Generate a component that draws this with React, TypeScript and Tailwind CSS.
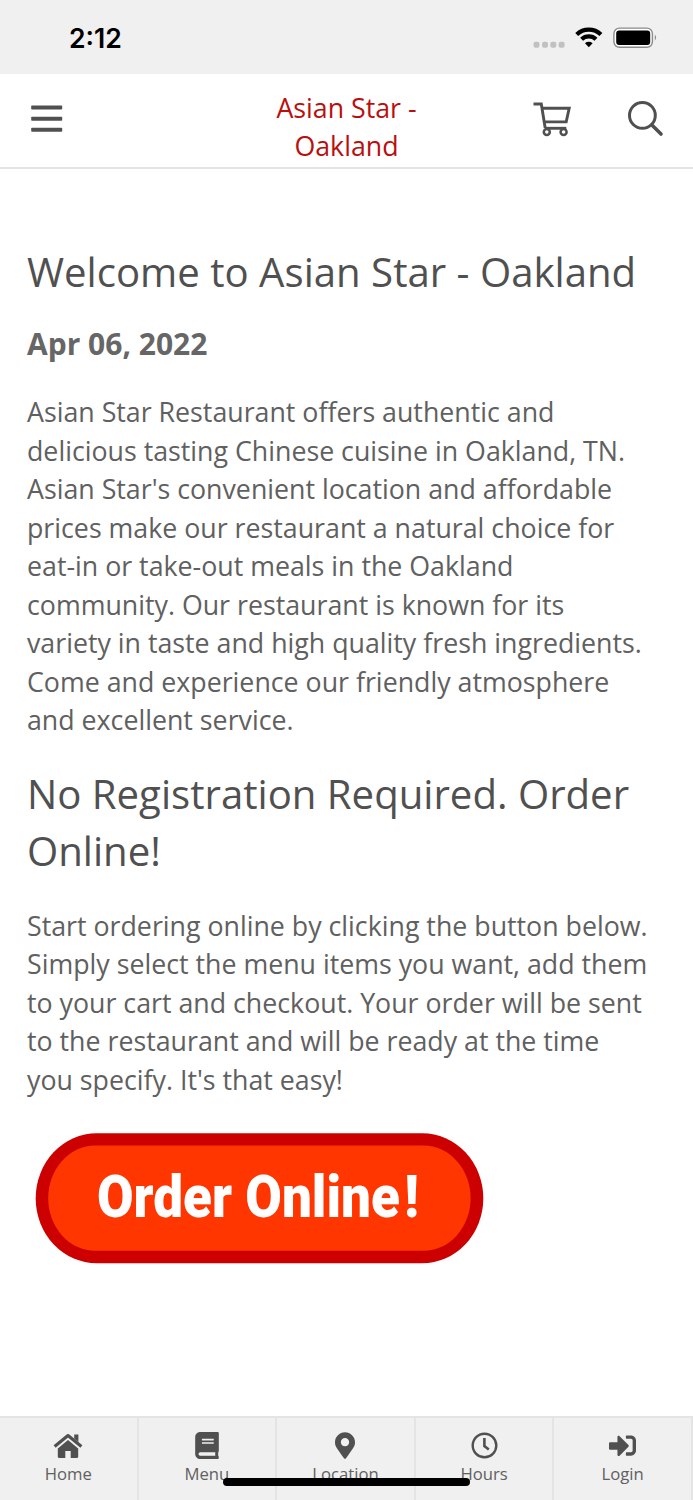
import { FaBook, FaMapMarkerAlt, FaSignInAlt } from "react-icons/fa";

const about = [
  { text: "Asian Star Restaurant offers authentic and" },
  { text: "delicious tasting Chinese cuisine in Oakland, TN." },
  { text: "Asian Star's convenient location and affordable" },
  { text: "prices make our restaurant a natural choice for" },
  { text: "eat-in or take-out meals in the Oakland" },
  { text: "community. Our restaurant is known for its" },
  { text: "variety in taste and high quality fresh ingredients." },
  { text: "Come and experience our friendly atmosphere" },
  { text: "and excellent service." },
];

const ordering = [
  { text: "Start ordering online by clicking the button below." },
  { text: "Simply select the menu items you want, add them" },
  { text: "to your cart and checkout. Your order will be sent" },
  { text: "to the restaurant and will be ready at the time" },
  { text: "you specify. It's that easy!" },
];

const HomeIcon = ({ className }: { className?: string }) => (
  <svg viewBox="0 0 30 27" className={className}>
    {/* Chimney */}
    <path d="M 21.2 2.4 H 25.4 V 10 L 21.2 6.4 Z" fill="currentColor" />
    {/* Roof */}
    <path d="M 1.6 14.6 L 15 3.6 L 28.4 14.6" fill="none" stroke="currentColor" strokeWidth="3.2" strokeLinejoin="round" />
    {/* Walls and door */}
    <path d="M 15 8 L 25.2 16.4 V 24.8 Q 25.2 25.9 24.1 25.9 H 17.7 V 19 H 12.3 V 25.9 H 5.9 Q 4.8 25.9 4.8 24.8 V 16.4 Z" fill="currentColor" />
  </svg>
);

const ClockIcon = ({ className }: { className?: string }) => (
  <svg viewBox="0 0 27 27" className={className} fill="none" stroke="currentColor">
    <circle cx="13.5" cy="13.5" r="11.8" strokeWidth="2.4" />
    <path d="M 13.4 6 V 14 L 17.8 17.5" strokeWidth="2.6" />
  </svg>
);

const tabs = [
  { label: "Home", icon: HomeIcon, size: "w-[30px] h-[27px]" },
  { label: "Menu", icon: FaBook, size: "w-[24px] h-[27px]" },
  { label: "Location", icon: FaMapMarkerAlt, size: "w-[20px] h-[27px]" },
  { label: "Hours", icon: ClockIcon, size: "w-[27px] h-[27px]" },
  { label: "Login", icon: FaSignInAlt, size: "w-[27px] h-[27px]" },
];

const StatusBar = () => (
  <div className="flex h-[74px] items-center justify-between bg-[#f0f0f0] pl-[69px] pr-[36px]">
    <span className="pt-[3px] font-['Inter'] text-[26.6px] font-semibold leading-[73px] text-black">2:12</span>
    <svg width="124" height="24" viewBox="0 0 124 24" className="mt-[2px]">
      {/* No signal dots */}
      <g fill="#c1c1c1">
        <rect x="0.5" y="15.8" width="6" height="6" rx="2" />
        <rect x="9" y="15.8" width="6" height="6" rx="2" />
        <rect x="17.3" y="15.8" width="6" height="6" rx="2" />
        <rect x="25.6" y="15.8" width="6" height="6" rx="2" />
      </g>
      {/* Wifi */}
      <g fill="none" stroke="#000" strokeWidth="4.2">
        <path d="M 43.7 8.4 A 17.5 17.5 0 0 1 67.9 8.4" />
        <path d="M 48.6 13.3 A 10.4 10.4 0 0 1 63 13.3" />
      </g>
      <path d="M 52 17.2 A 5.6 5.6 0 0 1 59.6 17.2 L 55.8 21.2 Z" fill="#000" />
      {/* Battery */}
      <rect x="80.9" y="2.1" width="38.5" height="19.2" rx="5.5" fill="#fff" stroke="#8a8a8a" strokeWidth="1.4" />
      <rect x="83.2" y="4.5" width="34" height="14.4" rx="3" fill="#000" />
      <path d="M 121.8 8.5 Q 124.4 11.6 121.8 14.7 Z" fill="#8a8a8a" />
    </svg>
  </div>
);

const Header = () => (
  <header className="grid h-[95px] grid-cols-[200px_1fr_200px] border-b-2 border-[#e4e4e4] bg-white">
    <button className="flex items-start pl-[31px] pt-[31px]" aria-label="Open navigation">
      <svg width="32" height="28" viewBox="0 0 32 28" fill="#505050">
        <rect x="0.2" y="0.6" width="31" height="4" rx="0.8" />
        <rect x="0.2" y="11.8" width="31" height="4" rx="0.8" />
        <rect x="0.2" y="22.8" width="31" height="4" rx="0.8" />
      </svg>
    </button>
    <h1 className="pt-[15px] text-center text-[26.75px] leading-[38px] text-[#b90f0f]">
      Asian Star -<br />
      Oakland
    </h1>
    <div className="flex items-start justify-end gap-[56px] pr-[29px] pt-[26px]">
      <svg width="39" height="37" viewBox="0 0 39 37" fill="none" stroke="#505050" strokeWidth="2.9">
        <path d="M 1.5 4 H 9.3 L 13.2 28" />
        <path d="M 10 8.2 H 37.2 L 34.2 21.9 H 12.3" />
        <path d="M 13 28.3 H 34.3" />
        <circle cx="14.8" cy="32" r="3" fill="#fff" strokeWidth="2.5" />
        <circle cx="31.6" cy="32" r="3" fill="#fff" strokeWidth="2.5" />
      </svg>
      <svg width="37" height="37" viewBox="0 0 37 37" fill="none" stroke="#505050" strokeWidth="3">
        <circle cx="15.4" cy="15.4" r="12.9" />
        <path d="M 24.9 25 L 34 34" strokeWidth="3.6" strokeLinecap="round" />
      </svg>
    </div>
  </header>
);

const Lines = ({ lines }: { lines: { text: string }[] }) => (
  <p className="text-[26.75px] leading-[38.5px] text-[#606060]">
    {lines.map((line) => (
      <span key={line.text} className="block whitespace-nowrap">
        {line.text}
      </span>
    ))}
  </p>
);

const OrderButton = () => (
  <a href="#order" className="ml-[8px] mt-[34px] block w-[449px]">
    <svg width="449" height="131" viewBox="0 0 449 131">
      <rect x="0.7" y="0.3" width="447.6" height="130" rx="61" ry="65" fill="#cc0000" />
      <rect x="13.2" y="12.6" width="422.4" height="105.2" rx="47" ry="52.6" fill="#ff3600" />
      <text
        x="62"
        y="83.5"
        dx="0 0 0 0 0 0 0 0 0 0 0 0 5"
        textLength="322"
        lengthAdjust="spacingAndGlyphs"
        className="fill-white font-['Roboto',sans-serif] text-[59px] font-black"
      >
        Order Online!
      </text>
    </svg>
  </a>
);

const TabBar = () => (
  <nav className="relative grid h-[84px] grid-cols-5 border-t-2 border-[#e4e4e4] bg-[#f0f0f0]">
    {tabs.map((tab) => (
      <a key={tab.label} href="#" className="flex flex-col items-center border-r-2 border-[#e4e4e4] pt-[14px] text-[#505050]">
        <tab.icon className={tab.size} />
        <span className="mt-[3px] text-[16.7px] leading-[24px] text-[#606060]">{tab.label}</span>
      </a>
    ))}
    {/* Home indicator */}
    <div className="absolute left-[223px] top-[60px] h-[8px] w-[247px] rounded-full bg-black" />
  </nav>
);

export default function App() {
  return (
    <div className="flex h-[1500px] w-[693px] flex-col overflow-hidden bg-white font-['Open_Sans',sans-serif]">
      <StatusBar />
      <Header />
      <main className="flex-1 pl-[27px] pt-[74px]">
        <h2 className="whitespace-nowrap text-[40.15px] leading-[57px] text-[#505050]">Welcome to Asian Star - Oakland</h2>
        <h3 className="mb-[27px] mt-[22px] text-[30px] font-bold leading-[44px] text-[#666]">Apr 06, 2022</h3>
        <Lines lines={about} />
        <h2 className="mb-[28px] mt-[25px] whitespace-nowrap text-[40.15px] leading-[57px] text-[#505050]">
          No Registration Required. Order
          <br />
          Online!
        </h2>
        <Lines lines={ordering} />
        <OrderButton />
      </main>
      <TabBar />
    </div>
  );
}
